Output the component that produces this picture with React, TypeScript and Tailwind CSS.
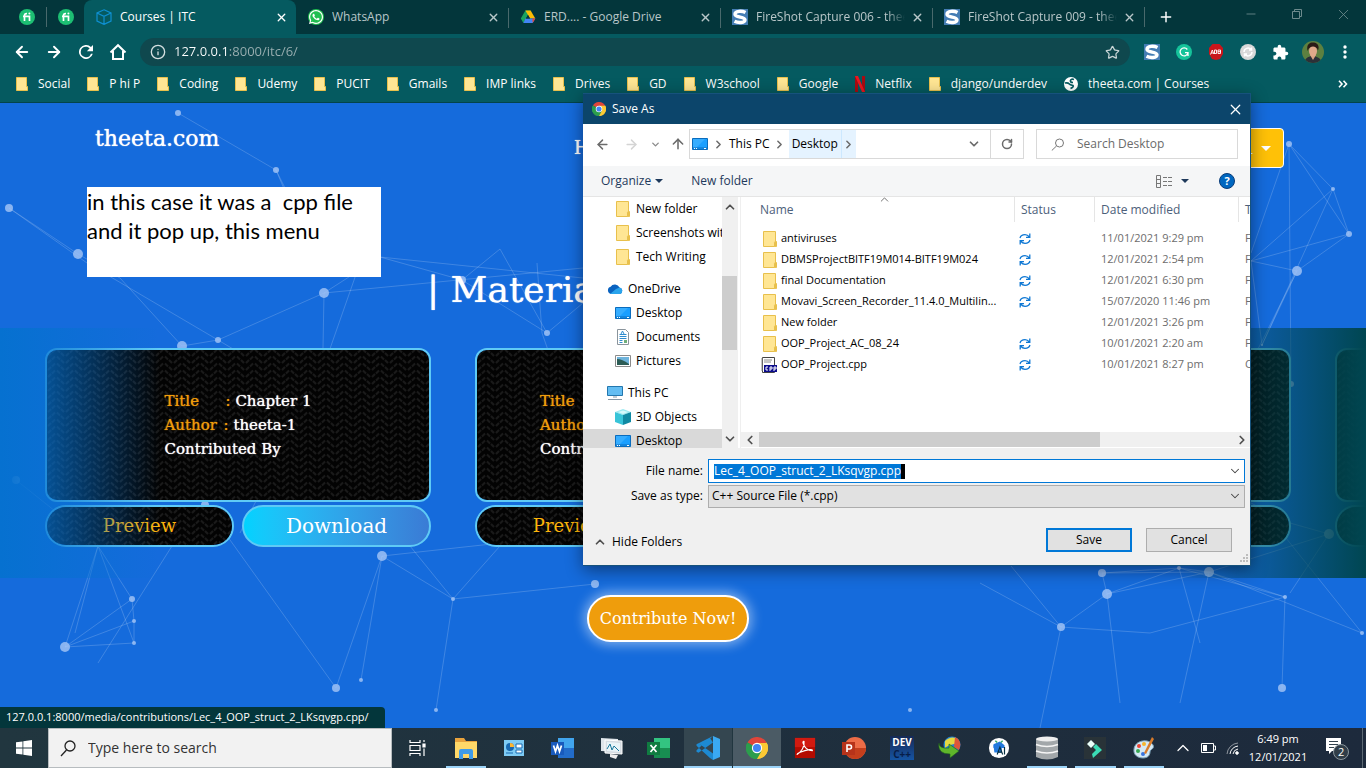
import React from "react";
import { ArrowLeft, ArrowRight, ArrowUp, ChevronDown, ChevronRight, ChevronUp, ChevronLeft, Plus, X, RotateCw, Search, Star, Info, Minus } from "lucide-react";
import { FaWhatsapp } from "react-icons/fa";
import { MdExtension } from "react-icons/md";

type P = { className?: string };

const Folder = ({ className = "" }: P) => (
  <svg viewBox="0 0 14 16" className={"h-4 w-3.5 shrink-0 " + className} aria-hidden="true">
    <path d="M.5.5h12v10h1v5H.5z" fill="#ffe694" stroke="#e8c04c" />
    <path d="M11.500 15.500v-4.300l1-1v5.300" fill="#ffe694" stroke="#e8c04c" />
  </svg>
);

const ChromeLogo = ({ className = "" }: P) => (
  <svg viewBox="0 0 24 24" className={className} aria-hidden="true">
    <path d="M12 12 1.600 6A12 12 0 0 1 22.400 6z" fill="#e0453a" />
    <path d="M12 12 22.400 6A12 12 0 0 1 12 24z" fill="#fcc934" />
    <path d="M12 12V24A12 12 0 0 1 1.600 6z" fill="#2c9d4d" />
    <path d="M12 6.500H22.700A12 12 0 0 1 12 24l5-9z" fill="#fcc934" />
    <path d="M7.200 14.800 1.600 6A12 12 0 0 0 12 24l4.800-8.500z" fill="#2c9d4d" />
    <circle cx="12" cy="12" r="5.600" fill="#fff" />
    <circle cx="12" cy="12" r="4.400" fill="#4285f4" />
  </svg>
);

const FiIcon = () => (
  <svg viewBox="0 0 16 16" className="h-4 w-4" aria-hidden="true">
    <circle cx="8" cy="8" r="8" fill="#1dbf73" />
    <path d="M5.500 12V6.500Q5.500 4.500 8 4.700M4 7.300h6.500V12" fill="none" stroke="#fff" strokeWidth="1.700" />
    <circle cx="10.400" cy="4.600" r="1" fill="#fff" />
  </svg>
);

const Cube = () => (
  <svg viewBox="0 0 16 16" className="h-4 w-4 shrink-0" fill="none" stroke="#0e8fd0" strokeWidth="1.200" aria-hidden="true">
    <path d="M8 .8 15 4v8l-7 3.400L1 12V4zM1 4l7 3.300L15 4M8 7.300v8" />
  </svg>
);

const Drive = () => (
  <svg viewBox="0 0 16 16" className="h-4 w-4 shrink-0" aria-hidden="true">
    <path d="M5.400 1.500h5.200L8 6 3.400 14 .8 9.600z" fill="#19a15f" />
    <path d="M5.400 1.500h5.200L15.300 9.600H10z" fill="#fbbc05" />
    <path d="M5.400 9.600h9.900L12.700 14H3.400z" fill="#4285f4" />
    <path d="m12.400 9.600h2.900L12.700 14z" fill="#ea4335" />
    <path d="m8 6-2.100 3.600h4.200z" fill="#03363b" />
  </svg>
);

const ShotS = () => (
  <svg viewBox="0 0 16 16" className="h-4 w-4 shrink-0" aria-hidden="true">
    <path d="M0 0h16v16H0z" fill="#447db4" />
    <path d="M13.500 3.500C10 1.700 3 1.600 3 5.200s10 2.200 10 5.600-7 3.300-10.500 1.500" fill="none" stroke="#fff" strokeWidth="3.400" />
  </svg>
);

const WhatsApp = () => (
  <span className="flex h-4 w-4 shrink-0 items-center justify-center rounded-full bg-[#1fbe50] text-white">
    <FaWhatsapp className="h-4 w-4" />
  </span>
);

const Desk = () => (
  <svg viewBox="0 0 16 12" className="h-3 w-4 shrink-0" aria-hidden="true">
    <path d="M.5.500h15v11H.5z" fill="#1a9fff" stroke="#0a6cbd" />
    <path d="M1 1h12L4 10H1z" fill="#36adff" />
    <path d="M1 10h14" stroke="#0a6cbd" />
    <path d="M2 10.500h1M4 10.500h1M12 10.500h2" stroke="#fff" />
  </svg>
);

const Cloud = () => (
  <svg viewBox="0 0 16 12" className="h-3 w-4 shrink-0" aria-hidden="true">
    <path d="M4 11a3.700 3.700 0 0 1-.4-7.200A5 5 0 0 1 12.500 4.600 3.300 3.300 0 0 1 13 11z" fill="#0a63c0" />
    <path d="m3 11 6-5 3.500-1.400A3.300 3.300 0 0 1 13 11z" fill="#2aa4ec" />
  </svg>
);

const Doc = () => (
  <svg viewBox="0 0 14 16" className="mx-px h-4 w-3.5 shrink-0" aria-hidden="true">
    <path d="M1.500.500h8l3 3v12h-11z" fill="#fff" stroke="#8a949c" />
    <path d="M3.500 5.500h7M3.500 7.500h7M3.500 9.500h7M3.500 11.500h3M3.500 13.500h3" stroke="#2f8ccf" />
    <path d="M8 11h3v3H8z" fill="#6fae7b" />
    <path d="m5 5 1.500-3L8 5" fill="none" stroke="#2f8ccf" />
  </svg>
);

const Pic = () => (
  <svg viewBox="0 0 16 12" className="h-3 w-4 shrink-0" aria-hidden="true">
    <path d="M.5.500h15v11H.5z" fill="#fff" stroke="#8b8b8b" />
    <path d="M2 2h12v8H2z" fill="#6fb4dc" />
    <path d="M2 4q5 0 12 5v1H2z" fill="#2c5c55" />
  </svg>
);

const Pc = () => (
  <svg viewBox="0 0 16 16" className="h-4 w-4 shrink-0" aria-hidden="true">
    <path d="M.5 1.500h15v9H.5z" fill="#63bdf2" stroke="#2377ae" />
    <path d="M6 12h4M1 14.500h14" stroke="#8597a5" />
  </svg>
);

const Box3d = () => (
  <svg viewBox="0 0 16 16" className="h-4 w-4 shrink-0" aria-hidden="true">
    <path d="m8 0 8 3-8 3-8-3z" fill="#9be9f0" />
    <path d="M0 3l8 3v10l-8-3z" fill="#38c4d8" />
    <path d="M16 3 8 6v10l8-3z" fill="#108aa3" />
    <path d="M3 3l5-1.600L13 3 8 5z" fill="#d6f9fb" />
  </svg>
);

const Cpp = () => (
  <svg viewBox="0 0 16 16" className="-ml-px mr-px h-4 w-4 shrink-0" aria-hidden="true">
    <path d="M1.500.500h12v15h-12z" fill="#fff" stroke="#444" />
    <path d="M3 3h8M3 5h7M1 14V1" stroke="#8a8a8a" />
    <path d="M3 8h13v7H3z" fill="#0c0c8c" />
    <path d="M7 10H5v3h2M9 14v-4h2v2H9M13 14v-4h2v2h-2" fill="none" stroke="#fff" />
  </svg>
);

const Sync = () => (
  <svg viewBox="0 0 12 12" className="h-3 w-3" fill="none" stroke="#0f78d4" strokeWidth="1.300" aria-label="Sync pending">
    <path d="M1 5Q2 1.700 6 1.700 8.500 1.700 10.500 4M10.800.500V4.300H7M11 7Q10 10.300 6 10.300 3.500 10.300 1.500 8M1.200 11.500V7.700H5" />
  </svg>
);

const tabs = [
  { title: "Courses | ITC", icon: <Cube />, active: true },
  { title: "WhatsApp", icon: <WhatsApp /> },
  { title: "ERD.... - Google Drive", icon: <Drive /> },
  { title: "FireShot Capture 006 - theeta", icon: <ShotS /> },
  { title: "FireShot Capture 009 - theeta", icon: <ShotS /> },
];

const NetflixN = () => (
  <svg viewBox="0 0 10 16" className="h-4 w-2.5" aria-hidden="true">
    <path d="M0 0h3v16H0zM7 0h3v16H7z" fill="#a80b12" />
    <path d="M0 0h3l7 16H7z" fill="#ec1620" />
  </svg>
);

const Globe = () => (
  <svg viewBox="0 0 14 14" className="h-3.5 w-3.5" aria-hidden="true">
    <circle cx="7" cy="7" r="7" fill="#fff" />
    <path d="M10 2.500q-3-1-3.500 1T9 5.500M1 6q3-.5 4 .7T9 8.500q1 1.500-2.500 3" stroke="#055a60" strokeWidth="1.700" fill="none" />
  </svg>
);

const bookmarks = ["Social", "P hi P", "Coding", "Udemy", "PUCIT", "Gmails", "IMP links", "Drives", "GD", "W3school", "Google", "Netflix", "django/underdev", "theeta.com | Courses"];

function Browser() {
  return (
    <header className="border-b border-[#03444a] bg-[#055a60] text-xs text-white">
      <div className="flex h-[34px] items-stretch bg-[#03363b]">
        <div className="flex w-[84px] shrink-0 items-center pl-[19px]">
          <FiIcon />
          <span className="mx-[11px] h-5 w-px bg-[#49696c]" />
          <FiIcon />
        </div>
        {tabs.map((t) => (
          <div
            key={t.title}
            className={
              t.active
                ? "relative flex w-[212px] items-center gap-2 rounded-t-lg bg-[#055a60] pl-3 pr-[7px]"
                : "relative flex w-[212px] items-center gap-2 pl-3 pr-[7px] text-[#b9c7c9]"
            }
          >
            {t.icon}
            <span className={t.title.startsWith("Fire") ? "-mr-1 flex-1 overflow-hidden whitespace-nowrap [mask-image:linear-gradient(90deg,#000_88%,transparent)]" : "flex-1 overflow-hidden whitespace-nowrap"}>{t.title}</span>
            <button aria-label={"Close " + t.title} className="flex h-4 w-4 items-center justify-center"><X size={13} strokeWidth={2.500} /></button>
            {!t.active && t.title !== "WhatsApp" && <span className="absolute left-0 top-2 h-5 w-px bg-[#49696c]" />}
          </div>
        ))}
        <button aria-label="New tab" className="flex w-[42px] items-center gap-[13px]">
          <span className="h-5 w-px bg-[#49696c]" />
          <Plus size={16} strokeWidth={2.200} />
        </button>
        <div className="ml-auto flex h-[28px] text-[#6d8a8d]">
          <button aria-label="Minimize" className="flex w-[46px] items-center justify-center"><Minus size={14} strokeWidth={1.500} /></button>
          <button aria-label="Restore" className="flex w-[46px] items-center justify-center">
            <svg viewBox="0 0 10 10" className="h-2.5 w-2.5" fill="none" stroke="currentColor"><path d="M.5 2.500h7v7h-7zM2.500 2.500v-2h7v7h-2" /></svg>
          </button>
          <button aria-label="Close window" className="flex w-[46px] items-center justify-center"><X size={17} strokeWidth={1.200} /></button>
        </div>
      </div>
      <div className="flex h-9 items-center">
        <div className="flex w-[140px] shrink-0 items-center gap-[14px] pl-[13px]">
          <button aria-label="Back"><ArrowLeft size={18} strokeWidth={2.500} /></button>
          <button aria-label="Forward"><ArrowRight size={18} strokeWidth={2.500} /></button>
          <button aria-label="Reload">
            <svg viewBox="4 4 16 16" className="mx-[2px] h-3.5 w-3.5" fill="#fff"><path d="M17.650 6.350A8 8 0 1 0 19.730 14h-2.080A6 6 0 1 1 12 6c1.660 0 3.140.690 4.220 1.780L13 11h7V4z" /></svg>
          </button>
          <button aria-label="Home">
            <svg viewBox="0 0 18 18" className="h-[18px] w-[18px]" fill="none" stroke="currentColor" strokeWidth="2"><path d="M1.500 9.500 9 2.200l7.500 7.300M4 8v8h10V8" /></svg>
          </button>
        </div>
        <div className="flex h-7 flex-1 items-center gap-2 rounded-full bg-[#0f484e] px-[10px]">
          <Info size={16} className="text-[#d4dfe0]" />
          <input
            aria-label="Address"
            defaultValue="127.0.0.1:8000/itc/6/"
            className="min-w-0 flex-1 bg-[linear-gradient(90deg,#fff_55px,#9bb0b2_55px)] bg-clip-text text-[13px] text-transparent outline-none"
          />
          <Star size={15} className="text-[#c8d5d6]" />
        </div>
        <div className="flex w-[236px] shrink-0 items-center gap-4 pl-[14px]">
          <ShotS />
          <svg viewBox="0 0 16 16" className="h-4 w-4"><circle cx="8" cy="8" r="8" fill="#15c39a" /><path d="M11.300 5.500A4 4 0 1 0 12 8.700H9M12 9v3" fill="none" stroke="#fff" strokeWidth="1.300" /></svg>
          <svg viewBox="0 0 16 16" className="h-4 w-4"><path d="M4.500 0h7L15 4v6l-3 5-4 1-4-1-3-5V4z" fill="#c9151b" /><path d="m2.500 10.500 1.800-4.500 1.500 4M6.500 10V6h2v3.500h-2M10 9.500V6h2.500v3.500H10M10 7.700h3M3 9h2.500" fill="none" stroke="#fff" strokeWidth=".9" /></svg>
          <svg viewBox="0 0 16 16" className="h-4 w-4"><circle cx="8" cy="8" r="8" fill="#d9d9d9" /><path d="M4 8a4 4 0 0 1 7-2.500M12 8a4 4 0 0 1-7 2.500M11.500 3.500v2.500H9M4.500 12.500V10H7" fill="none" stroke="#fff" strokeWidth="1.500" /></svg>
          <MdExtension size={17} />
          <svg viewBox="0 0 22 22" className="-mx-[3px] h-[22px] w-[22px]">
            <defs><clipPath id="av"><circle cx="11" cy="11" r="11" /></clipPath></defs>
            <g clipPath="url(#av)"><path d="M0 0h22v22H0z" fill="#5d8040" /><path d="M2 22c1-6 6-7 9-7s8 2 9 7z" fill="#2b3038" /><path d="M8 14h6l-3 5z" fill="#d9a282" /><ellipse cx="11" cy="10" rx="4" ry="5.500" fill="#e0a98a" /><path d="M5.500 10C4 2 9 1 12 1.500s6 3 4 8c-1-3-3-4-5-4s-4 1-5.500 4.500z" fill="#2a1b16" /></g>
          </svg>
          <button aria-label="Menu"><svg viewBox="0 0 4 14" className="ml-[6px] h-3.5 w-1" fill="#fff"><circle cx="2" cy="2" r="1.700" /><circle cx="2" cy="7" r="1.700" /><circle cx="2" cy="12" r="1.700" /></svg></button>
        </div>
      </div>
      <nav aria-label="Bookmarks" className="flex h-8 items-center gap-[17px] overflow-hidden pb-1 pl-4 pr-[18px]">
        {bookmarks.map((b) => (
          <a key={b} href="#" className="flex items-center gap-[10px] whitespace-nowrap">
            {b === "Netflix" ? <NetflixN /> : b.startsWith("theeta") ? <Globe /> : (
              <svg viewBox="0 0 12 14" className="h-3.5 w-3" aria-hidden="true"><path d="M.5.500h10v9h1v4H.5z" fill="#ffe694" stroke="#e8c04c" /></svg>
            )}
            {b}
          </a>
        ))}
        <button aria-label="More bookmarks" className="ml-auto"><svg viewBox="0 0 10 8" className="h-2 w-2.5" fill="none" stroke="#fff" strokeWidth="1.600"><path d="m1 .8 3 3.200-3 3.200M5.500.800l3 3.200-3 3.200" /></svg></button>
      </nav>
    </header>
  );
}

const nodes = [
  [178, 10, 3], [276, 67, 3], [9, 105, 4], [78, 151, 5], [324, 190, 5], [218, 237, 3], [182, 243, 5], [205, 402, 4], [16, 377, 4],
  [65, 544, 5], [132, 496, 3], [134, 518, 2], [134, 540, 2], [336, 585, 4], [361, 577, 2], [453, 496, 2], [382, 453, 5], [462, 177, 4],
  [547, 230, 3], [595, 481, 4], [436, 607, 2], [1289, 41, 3], [1333, 86, 2], [1349, 131, 3], [1297, 168, 5], [1102, 470, 4], [1107, 491, 5],
  [1209, 469, 5], [1179, 465, 2], [1061, 524, 4], [1285, 494, 2], [1282, 585, 4], [1329, 431, 5], [1291, 281, 3], [910, 607, 2], [1262, 242, 1], [1362, 530, 2],
];
const links = [
  "M178 10 276 67 310 135M276 67 290 100", "M9 105 78 151 120 175 182 243 218 237 324 190 322 300", "M9 105 87 160 218 237 260 262",
  "M324 190 380 154 462 177 500 146 547 230 462 177M380 154 583 175M324 190 583 165M537 160 542 230 549 250M360 160 325 260 240 430M547 230 583 200",
  "M98 443 65 544 132 496 134 518 134 540 98 443M98 443 132 496M65 544 134 518M65 544 134 540M16 377 55 408",
  "M172 443 98 560M98 443 75 530M205 402 336 585 382 453 453 496 500 443 583 431 382 453M382 453 361 577M453 496 436 607M453 496 595 481M410 443 453 496",
  "M1289 41 1333 86 1349 131 1297 168 1251 158 1349 131 1289 41 1251 150M1333 86 1251 158M1333 86 1262 242 1251 158M1297 168 1262 242M1289 41 1291 281M1297 168 1251 260",
  "M1102 470 1179 465 1209 469 1329 431 1290 420 1251 400M1102 470 1107 491 1179 465 1285 494 1209 469M1107 491 1061 524 1040 625M1107 491 1120 600M1107 491 1209 469 1180 600M1061 524 1150 530 1285 494 1282 585M1102 470 1209 469 1362 530M1179 465 1200 540M1329 431 1290 490M1011 463 1061 524 980 480M1270 415 1362 530",
];

function Network() {
  return (
    <svg viewBox="0 0 1366 625" preserveAspectRatio="xMidYMin slice" className="absolute inset-0 h-full w-full" aria-hidden="true">
      <g fill="none" stroke="#fff" strokeOpacity=".18">{links.map((d) => <path key={d} d={d} />)}</g>
      <g fill="#9dc1f4" fillOpacity=".85">{nodes.map(([x, y, r]) => <circle key={x + "-" + y} cx={x} cy={y} r={r} />)}</g>
    </svg>
  );
}

function Weave() {
  return (
    <svg className="absolute inset-0 h-full w-full" aria-hidden="true">
      <defs>
        <pattern id="weave" width="18" height="7" patternUnits="userSpaceOnUse">
          <path d="M0 0h18v7H0z" fill="#030303" />
          <path d="m1 6 3-3M5 2.500l3-3M5 9.500l3-3M10 -.5l3 3M10 6.500l3 3M14 3l3 3" stroke="#1a1a1a" strokeWidth="2" />
        </pattern>
      </defs>
      <rect width="100%" height="100%" fill="url(#weave)" />
    </svg>
  );
}

function Course({ title, author, wide, download = true }: { title: string; author: string; wide?: boolean; download?: boolean }) {
  return (
    <article className="w-[386px] shrink-0">
      <div className="relative flex h-[154px] items-center justify-center overflow-hidden rounded-xl border-2 border-[#5fcaf5]">
        <Weave />
        <div className={wide ? "relative w-64 text-[15px] leading-6 text-white" : "relative text-[15px] leading-6 text-white"}>
          <p><span className="inline-block w-[61px] text-[#f09c0b]">Title</span><span className="text-[#f09c0b]">:</span>&nbsp;{title}</p>
          <p><span className="inline-block w-[59px] text-[#f09c0b]">Author</span><span className="text-[#f09c0b]">:</span>&nbsp;{author}</p>
          <p>Contributed By</p>
        </div>
      </div>
      <div className="mt-[3px] flex gap-2">
        <button className="relative h-[42px] flex-1 overflow-hidden rounded-full border-2 border-[#5fcaf5] text-lg text-[#fdb40b]">
          <Weave />
          <span className="relative">Preview</span>
        </button>
        {download && <button className="h-[42px] flex-1 rounded-full border-2 border-[#5fcaf5] bg-linear-to-r from-[#00d2ff] to-[#3a7bd5] text-xl text-white">Download</button>}
      </div>
    </article>
  );
}

function Page() {
  return (
    <main className="relative flex-1 overflow-hidden bg-[#156bdc] font-['DejaVu_Serif',serif] text-white [text-shadow:0_0_1px_currentColor]">
      <Network />
      <div className="relative flex h-[90px] items-center px-[82px] pl-[95px] pb-5">
        <a href="#" className="w-[479px] text-[22px]">theeta.com</a>
        <a href="#" className="pt-5 text-lg">Home</a>
        <button className="ml-auto mt-5 flex h-10 items-center gap-2 rounded-[4px] border border-white bg-[#ffc107] px-3 text-lg">
          Material
          <svg viewBox="0 0 10 5" className="h-[5px] w-2.5" fill="#fff"><path d="M0 0h10L5 5z" /></svg>
        </button>
      </div>
      <h1 className="relative pl-[427px] pt-[72px] text-4xl leading-[50px]">| Material</h1>
      <section className="relative mt-[13px] h-[250px] overflow-hidden pl-[45px] pt-5">
        <div className="flex gap-11">
          <Course title="Chapter 1" author="theeta-1" />
          <Course title="Chapter 2" author="theeta-1" wide />
          <Course title="Chapter 3" author="theeta-1" download={false} />
          <Course title="Chapter 4" author="theeta-1" />
        </div>
        <div className="pointer-events-none absolute inset-y-0 left-0 w-40 bg-linear-to-r from-[#0671d0] to-[#0671d0]/0" />
        <div className="pointer-events-none absolute inset-y-0 right-0 w-[190px] bg-linear-to-l from-[#004651] to-[#004651]/0" />
      </section>
      <div className="relative flex justify-center pr-[30px] pt-[17px]">
        <button className="h-[47px] rounded-full border-2 border-white bg-[#ef9d0c] px-[11px] text-base shadow-[0_0_12px_3px_rgba(255,255,255,0.45)]">Contribute Now!</button>
      </div>
      <div className="absolute bottom-0 left-0 flex h-[21px] items-center rounded-tr bg-[#03363b] px-[6px] pr-4 font-['Open_Sans',sans-serif] text-[11px] [text-shadow:none]">127.0.0.1:8000/media/contributions/Lec_4_OOP_struct_2_LKsqvgp.cpp/</div>
    </main>
  );
}

const tree = [
  { label: "New folder", icon: <Folder className="mx-px" /> },
  { label: "Screenshots with", icon: <Folder className="mx-px" /> },
  { label: "Tech Writing", icon: <Folder className="mx-px" /> },
  { label: "OneDrive", icon: <Cloud />, root: true },
  { label: "Desktop", icon: <Desk />, first: true },
  { label: "Documents", icon: <Doc /> },
  { label: "Pictures", icon: <Pic /> },
  { label: "This PC", icon: <Pc />, root: true },
  { label: "3D Objects", icon: <Box3d /> },
  { label: "Desktop", icon: <Desk />, selected: true },
];

const files = [
  ["antiviruses", "11/01/2021 9:29 pm", true],
  ["DBMSProjectBITF19M014-BITF19M024", "12/01/2021 2:54 pm", true],
  ["final Documentation", "12/01/2021 6:30 pm", true],
  ["Movavi_Screen_Recorder_11.4.0_Multilin...", "15/07/2020 11:46 pm", true],
  ["New folder", "12/01/2021 3:26 pm", false],
  ["OOP_Project_AC_08_24", "10/01/2021 2:20 am", true],
  ["OOP_Project.cpp", "10/01/2021 8:27 pm", true],
] as const;

function SaveDialog() {
  return (
    <div role="dialog" aria-label="Save As" className="absolute left-[583px] top-[93px] w-[668px] border-y border-r border-[#16527c] bg-white text-xs text-black shadow-[0_4px_16px_rgba(0,0,0,0.45)]">
      <div className="flex h-[30px] items-center gap-[6px] bg-[#0c456b] pl-[9px] text-white">
        <ChromeLogo className="h-3.5 w-3.5" />
        Save As
        <button aria-label="Close dialog" className="ml-auto flex w-[30px] items-center justify-center"><X size={17} strokeWidth={1.700} /></button>
      </div>
      <div className="flex h-[40px] items-center pl-3 pr-3">
        <button aria-label="Back" className="w-[29px] text-[#6b6b6b]"><ArrowLeft size={15} strokeWidth={2.300} /></button>
        <button aria-label="Forward" className="w-[26px] text-[#d4d4d4]"><ArrowRight size={15} strokeWidth={2.300} /></button>
        <button aria-label="Recent" className="w-5 text-[#8a8a8a]"><ChevronDown size={11} strokeWidth={3} /></button>
        <button aria-label="Up" className="w-[19px] text-[#6b6b6b]"><ArrowUp size={16} strokeWidth={2.300} /></button>
        <div className="flex h-[30px] flex-1 items-stretch border border-[#d9d9d9]">
          <span className="flex items-center gap-1 pl-[2px]"><Desk /><ChevronRight size={13} strokeWidth={2.800} className="text-[#6b6b6b]" /></span>
          <button className="pl-1">This PC</button>
          <ChevronRight size={13} strokeWidth={2.800} className="mx-[3px] self-center text-[#6b6b6b]" />
          <button className="bg-[#e5f3ff] px-[3px]">Desktop</button>
          <span className="flex w-[15px] items-center justify-center border-l border-[#cce8ff] bg-[#e5f3ff]"><ChevronRight size={13} strokeWidth={2.800} className="text-[#6b6b6b]" /></span>
          <button aria-label="Previous locations" className="ml-auto flex w-8 items-center justify-center text-[#6b6b6b]"><ChevronDown size={14} strokeWidth={3} /></button>
          <button aria-label="Refresh" className="flex w-[33px] items-center justify-center border-l border-[#d9d9d9] text-[#6b6b6b]"><RotateCw size={12} strokeWidth={3} /></button>
        </div>
        <label className="ml-3 flex h-[30px] w-[202px] items-center gap-3 border border-[#d9d9d9] pl-[14px]">
          <svg viewBox="0 0 14 13" className="h-[13px] w-3.5 shrink-0" fill="none" stroke="#777"><circle cx="8.500" cy="5" r="4" /><path d="M5.500 8 .8 12.500" /></svg>
          <input aria-label="Search Desktop" placeholder="Search Desktop" className="min-w-0 flex-1 outline-none placeholder:text-[#6b6b6b]" />
        </label>
      </div>
      <div className="mt-[2px] flex h-[31px] items-center border-b border-[#e5e5e5] bg-[#f5f6f7] pl-[18px] pr-[15px] text-[#1e395b]">
        <button className="flex items-center gap-1">Organize<svg viewBox="0 0 8 4" className="h-1 w-2" fill="#1e395b"><path d="M0 0h8L4 4z" /></svg></button>
        <button className="ml-7">New folder</button>
        <button aria-label="Change view" className="ml-auto flex items-center gap-[9px]">
          <svg viewBox="0 0 16 13" className="h-[13px] w-4" fill="none" stroke="#777"><path d="M.5.500h4v12h-4zM.5 4.500h4M.5 8.500h4M7 2.500h4M12 2.500h4M7 6.500h4M12 6.500h4M7 10.500h4M12 10.500h4" /></svg>
          <svg viewBox="0 0 8 4" className="h-1 w-2" fill="#1e395b"><path d="M0 0h8L4 4z" /></svg>
        </button>
        <button aria-label="Help" className="ml-[30px] flex h-4 w-4 items-center justify-center rounded-full border border-[#0a3d7a] bg-[#0067c0] text-[11px] font-bold text-white">?</button>
      </div>
      <div className="flex h-[251px]">
        <div className="flex w-[139px] shrink-0 flex-col overflow-hidden">
          {tree.map((t, i) => (
            <button
              key={i}
              className={
                t.root
                  ? "mt-2 flex h-6 shrink-0 items-center gap-[5px] whitespace-nowrap pl-6"
                  : t.selected
                  ? "flex h-6 shrink-0 items-center gap-[5px] whitespace-nowrap bg-[#d9d9d9] pl-8"
                  : "flex h-6 shrink-0 items-center gap-[5px] whitespace-nowrap pl-8"
              }
            >
              {t.icon}{t.label}
            </button>
          ))}
        </div>
        <div className="flex w-4 shrink-0 flex-col bg-[#f0f0f0] text-[#505050]">
          <ChevronUp size={14} strokeWidth={3} className="mx-auto mt-[3px]" />
          <div className="mr-px mt-[62px] h-[74px] bg-[#cdcdcd]" />
          <ChevronDown size={14} strokeWidth={3} className="mx-auto mb-[2px] mt-auto" />
        </div>
        <div className="ml-[2px] flex min-w-0 flex-1 flex-col border-l border-[#efefef]">
          <div className="relative flex-1 overflow-hidden">
            <ChevronUp size={13} strokeWidth={1.500} className="absolute left-[137px] top-[-4px] text-[#555]" />
            <table className="w-[580px] table-fixed border-collapse text-left">
              <colgroup><col className="w-[273px]" /><col className="w-[80px]" /><col className="w-[144px]" /><col /></colgroup>
              <thead className="text-[#4c607a]">
                <tr className="h-[31px] align-top">
                  <th className="p-0 pl-[19px] font-normal leading-[25px]">Name</th>
                  {["Status", "Date modified", "Type"].map((h) => (
                    <th key={h} className="p-0 font-normal"><div className="h-[25px] border-l border-[#e5e5e5] pl-[6px] leading-[25px]">{h}</div></th>
                  ))}
                </tr>
              </thead>
              <tbody className="text-[11px]">
                {files.map(([name, date, sync]) => (
                  <tr key={name} className="h-[21px]">
                    <td className="p-0 pl-[21px]"><span className="flex items-center gap-[3px] whitespace-nowrap">{name.endsWith("cpp") ? <Cpp /> : <Folder className="mx-px" />}{name}</span></td>
                    <td className="p-0 pl-[5px]">{sync && <Sync />}</td>
                    <td className="p-0 pl-[7px] text-[#6d6d6d]">{date}</td>
                    <td className="p-0 pl-[7px] text-[#6d6d6d]">{name.endsWith("cpp") ? "C++" : "File folder"}</td>
                  </tr>
                ))}
              </tbody>
            </table>
          </div>
          <div className="mb-px flex h-[15px] items-center bg-[#f0f0f0] text-[#505050]">
            <span className="flex w-[18px] justify-center"><ChevronLeft size={14} strokeWidth={3} /></span>
            <div className="h-full w-[341px] bg-[#cdcdcd]" />
            <ChevronRight size={14} strokeWidth={3} className="ml-auto mr-px" />
          </div>
        </div>
      </div>
      <div className="bg-[#f0f0f0] pb-[13px] pt-[11px]">
        <div className="flex items-center pr-[5px]">
          <label htmlFor="file-name" className="w-[125px] pr-[5px] text-right">File name:</label>
          <div className="flex h-6 flex-1 items-center border border-[#0078d7] bg-white pl-[5px] pr-[2px]">
            <input id="file-name" defaultValue="Lec_4_OOP_struct_2_LKsqvgp.cpp" className="h-[15px] bg-[#0078d7] text-white outline-none [field-sizing:content]" />
            <span className="h-[15px] w-1 bg-black" />
            <ChevronDown size={14} strokeWidth={1.800} className="ml-auto text-[#444]" />
          </div>
        </div>
        <div className="mt-px flex items-center pr-[5px]">
          <label htmlFor="save-type" className="w-[125px] pr-[5px] text-right">Save as type:</label>
          <div className="relative flex h-6 flex-1 items-center">
            <select id="save-type" className="h-[23px] w-full appearance-none border border-[#adadad] bg-[#e1e1e1] pl-[3px] text-xs"><option>C++ Source File (*.cpp)</option></select>
            <ChevronDown size={14} strokeWidth={1.800} className="pointer-events-none absolute right-[3px] top-[5px] text-[#444]" />
          </div>
        </div>
        <div className="mt-5 flex items-center gap-[14px] pl-[10px] pr-[18px]">
          <button className="mr-auto flex items-center gap-[5px] pt-1"><ChevronUp size={14} strokeWidth={3} className="text-[#505050]" />Hide Folders</button>
          <button className="h-6 w-[86px] border-2 border-[#0078d7] bg-[#e1e1e1]">Save</button>
          <button className="h-6 w-[86px] border border-[#adadad] bg-[#e1e1e1]">Cancel</button>
        </div>
        <svg viewBox="0 0 9 9" className="absolute bottom-[2px] right-[2px] h-[9px] w-[9px]" fill="#bdbdbd" aria-hidden="true"><path d="M7 0h2v2H7zM4 3h2v2H4zM7 3h2v2H7zM1 6h2v2H1zM4 6h2v2H4zM7 6h2v2H7z" /></svg>
      </div>
    </div>
  );
}

const Office = ({ color, dark, d }: { color: string; dark: string; d: string }) => (
  <svg viewBox="0 0 24 24" className="h-6 w-6">
    <path d="M7 2h16v20H7z" fill={color} /><path d="M7 12h16v10H7z" fill={dark} fillOpacity=".75" />
    <path d="M0 6h13v13H0z" fill={dark} /><path d={d} fill="none" stroke="#fff" strokeWidth="1.700" />
  </svg>
);

const apps: { name: string; state?: "open" | "active"; icon: React.ReactNode }[] = [
  { name: "File Explorer", state: "open", icon: <svg viewBox="0 0 24 24" className="h-6 w-6"><path d="M1 2h9l2 3h11v17H1z" fill="#e8a33d" /><path d="M1 6h22v16H1z" fill="#ffd868" /><path d="M5 23v-8q0-2 2-2h10q2 0 2 2v8h-4v-5H9v5z" fill="#3f9be8" /></svg> },
  { name: "Control Panel", icon: <svg viewBox="0 0 24 24" className="h-6 w-6"><path d="M2 4h20v16H2z" fill="#7ecbf4" /><circle cx="8" cy="11" r="4" fill="#1768b0" /><path d="M8 11V7a4 4 0 0 1 4 4z" fill="#ffb52e" /><path d="M14 8h6v4h-6zM14 14h6v3h-6zM4 17h7" fill="#fff" stroke="#1768b0" /></svg> },
  { name: "Word", icon: <Office color="#41a5ee" dark="#185abd" d="m2.500 9.500 2 6 2-6 2 6 2-6" /> },
  { name: "Resource Monitor", icon: <svg viewBox="0 0 24 24" className="h-6 w-6"><path d="m2 2 17 1v13L2 15z" fill="#dfe5ea" /><path d="m6 4 17 1v13L6 17z" fill="#d5dce2" stroke="#fff" /><path d="m8 6 13 1v9L8 15z" fill="#e9f4f8" /><path d="m8 13 3-5 2 6 2-4 5 5" fill="none" stroke="#19789c" /><path d="m11 18 8 1-2 4-6-2z" fill="#eee" /></svg> },
  { name: "Excel", icon: <Office color="#33c481" dark="#107c41" d="m3.500 9 6 7M9.500 9l-6 7" /> },
  { name: "Visual Studio Code", state: "active", icon: <svg viewBox="0 0 24 24" className="h-6 w-6"><path d="M17 0 6 10 2.500 7.300.500 8.300v1.400L14 22l3 2v-6.500L2.500 7.300M17 6.500 2.500 16.700.500 15.700v-1.400L14 2" fill="#1d8ad2" /><path d="m17 0 7 3v18l-7 3z" fill="#3aa9f2" /></svg> },
  { name: "Chrome", state: "active", icon: <ChromeLogo className="h-[22px] w-[22px]" /> },
  { name: "Acrobat", icon: <svg viewBox="0 0 24 24" className="h-[22px] w-[22px]"><path d="M1 1h22v22H1z" fill="#b30b00" /><path d="M1 1h22v10H1z" fill="#d21a10" /><path d="M4 18c3-1 8-7 7-13 0-1-2 0-1 2 2 6 6 8 10 8 1-2-5-2-14 2-3 2-3 3-2 1z" fill="none" stroke="#fff" strokeWidth="1.200" /></svg> },
  { name: "PowerPoint", icon: <svg viewBox="0 0 24 24" className="h-6 w-6"><circle cx="13" cy="12" r="11" fill="#ed6c47" /><path d="M13 12h11a11 11 0 0 1-22 0z" fill="#c43e1c" /><path d="M0 6h13v13H0z" fill="#b7331a" /><path d="M5 16V9h2.500a2 2 0 0 1 0 4H5" fill="none" stroke="#fff" strokeWidth="1.600" /></svg> },
  { name: "Dev-C++", icon: <span className="flex h-6 w-6 flex-col bg-linear-to-b from-[#152a56] to-[#1454a3] text-center text-[10px] font-bold leading-3 text-white"><span>DEV</span><span className="text-[#071d48]">C++</span></span> },
  { name: "Download Manager", icon: <svg viewBox="0 0 24 24" className="h-6 w-6"><circle cx="14" cy="9" r="8.500" fill="#2683cf" /><path d="M7 5q6-6 13-2 2 4-4 5T7 12z" fill="#e5d842" /><path d="M17 1q8 4 4 13l-5-3z" fill="#de563a" /><path d="M1 7q0 6 10 5V8l10 7-9 7v-4Q-1 18 1 7z" fill="#5fb62b" stroke="#1c5d20" strokeWidth=".6" /></svg> },
  { name: "Android Studio", icon: <svg viewBox="0 0 24 24" className="h-[22px] w-[22px]"><circle cx="12" cy="12" r="11" fill="#fff" /><path d="M6 8 13 5l5 4v3H6z" fill="#2379dd" /><path d="M6 9h9v8H7z" fill="#2379dd" /><path d="m8 4 2 2M16 4l-2 2" stroke="#2fa66b" strokeWidth="1.500" /><path d="m10 19 3-8 3 8M11 16.500h4M18 11v8" fill="none" stroke="#073042" strokeWidth="1.300" /></svg> },
  { name: "Database", state: "open", icon: <svg viewBox="0 0 24 24" className="h-6 w-6"><path d="M1 3v18q11 5 22 0V3z" fill="#a2a7aa" /><ellipse cx="12" cy="3" rx="11" ry="2.500" fill="#eee" /><path d="M1 8.500q11 4 22 0M1 15q11 4 22 0" stroke="#f5f5f5" strokeWidth="1.500" fill="none" /></svg> },
  { name: "Filmora", state: "open", icon: <svg viewBox="0 0 24 24" className="h-6 w-6"><path d="M1 1h22v22H1z" fill="#293338" /><path d="m8 4 4 4-4 4-4-4z" fill="#eafff9" /><path d="m13 8 6 6-9 8-1-4 4-4-3-3z" fill="#3bdcb5" /></svg> },
  { name: "Paint", state: "open", icon: <svg viewBox="0 0 24 24" className="h-6 w-6"><path d="M2 13C3 4 17 2 21 9c2 4-3 4-3 7s-2 6-7 6S1 19 2 13z" fill="#d5e9f4" stroke="#7ba0b6" /><circle cx="7" cy="10" r="2" fill="#e94436" /><circle cx="12" cy="8" r="2" fill="#f6b52c" /><circle cx="6" cy="15" r="2" fill="#36a852" /><circle cx="11" cy="18" r="2" fill="#3974dc" /><path d="m20 1 2 2-8 15-2-1z" fill="#d87b2a" /></svg> },
];

function Taskbar() {
  return (
    <footer className="flex h-10 items-stretch bg-linear-to-r from-[#21363f] to-[#1d2a3c] text-white">
      <button aria-label="Start" className="flex w-12 shrink-0 items-center justify-center"><svg viewBox="0 0 16 16" className="h-4 w-4" fill="#fff"><path d="m0 2.300 6.500-.9v6.200H0zM7.300 1.300 16 0v7.600H7.300zM0 8.400h6.500v6.200L0 13.700zM7.300 8.400H16V16l-8.700-1.300z" /></svg></button>
      <label className="flex w-[344px] shrink-0 items-center gap-3 border border-[#b7bcbf] bg-[#f2f2f2] pl-[11px] text-[#333]">
        <svg viewBox="0 0 16 17" className="h-[17px] w-4 shrink-0" fill="none" stroke="#222" strokeWidth="1.300"><circle cx="10" cy="6" r="5" /><path d="M6.500 10 1 16" /></svg>
        <input aria-label="Type here to search" placeholder="Type here to search" className="min-w-0 flex-1 text-sm outline-none placeholder:text-[#333]" />
      </label>
      <button aria-label="Task View" className="flex w-[50px] shrink-0 items-center justify-center"><svg viewBox="0 0 17 16" className="h-4 w-[17px]" fill="none" stroke="#fff" strokeWidth="1.200"><path d="M1 0v2.500h10V0M1 5.500h10v5H1zM1 16v-2.500h10V16M15 0v2M15 8.500V16" /><path d="M14 4h2v3h-2z" fill="#fff" /></svg></button>
      <div className="flex flex-1">
        {apps.map((a) => (
          <button
            key={a.name}
            aria-label={a.name}
            className={
              a.name === "Chrome"
                ? "relative flex flex-1 items-center justify-center border-l border-[#21363f] bg-[#4b5b65]"
                : a.state === "active"
                ? "relative flex flex-1 items-center justify-center bg-[#344650]"
                : "relative flex flex-1 items-center justify-center"
            }
          >
            {a.icon}
            {a.state && <span className={a.state === "active" ? "absolute inset-x-0 bottom-0 h-[2px] bg-[#9bd3f8]" : "absolute inset-x-1 bottom-0 h-[2px] bg-[#9bd3f8]"} />}
          </button>
        ))}
      </div>
      <div className="flex w-[198px] shrink-0 items-center pl-[5px]">
        <ChevronUp size={20} strokeWidth={1.500} />
        <svg viewBox="0 0 16 10" className="ml-[7px] h-2.5 w-4" fill="none" stroke="#fff"><path d="M1.500.500h12v9h-12zM14 3h1.500v4H14" /><path d="M3 2h4v6H3z" fill="#fff" stroke="none" /></svg>
        <svg viewBox="0 0 14 14" className="ml-[9px] h-3.5 w-3.5" fill="none" stroke="#fff"><path d="M2 13A12 12 0 0 1 13 2" strokeOpacity=".5" /><path d="M5 13a9 9 0 0 1 8-8M8 13a6 6 0 0 1 5-5" /><circle cx="12" cy="12" r="1.300" fill="#fff" /></svg>
        <div className="w-[78px] text-center text-[11px] leading-[18px]"><div>6:49 pm</div><div>12/01/2021</div></div>
        <button aria-label="Notifications" className="relative ml-[6px] h-6 w-7">
          <svg viewBox="0 0 28 24" className="h-6 w-7"><path d="M3 2h15v13H9l-3 3v-3H3z" fill="#fff" /><path d="M6 5.500h9M6 8.500h9M6 11.500h5" stroke="#33434e" /><circle cx="18" cy="16" r="7.500" fill="#303d48" stroke="#8b979e" /></svg>
          <span className="absolute left-[15px] top-[8px] text-[11px] leading-4">2</span>
        </button>
        <span className="ml-auto mr-[3px] h-full w-px bg-[#5c6973]" />
      </div>
    </footer>
  );
}

export default function App() {
  return (
    <div className="relative flex min-h-screen flex-col overflow-hidden font-['Open_Sans',sans-serif]">
      <Browser />
      <Page />
      <p className="absolute left-[87px] top-[187px] h-[90px] w-[294px] whitespace-pre bg-white font-['Lato','Open_Sans',sans-serif] text-[22px] leading-[29px] text-black">{"in this case it was a  cpp file\nand it pop up, this menu"}</p>
      <SaveDialog />
      <Taskbar />
    </div>
  );
}
